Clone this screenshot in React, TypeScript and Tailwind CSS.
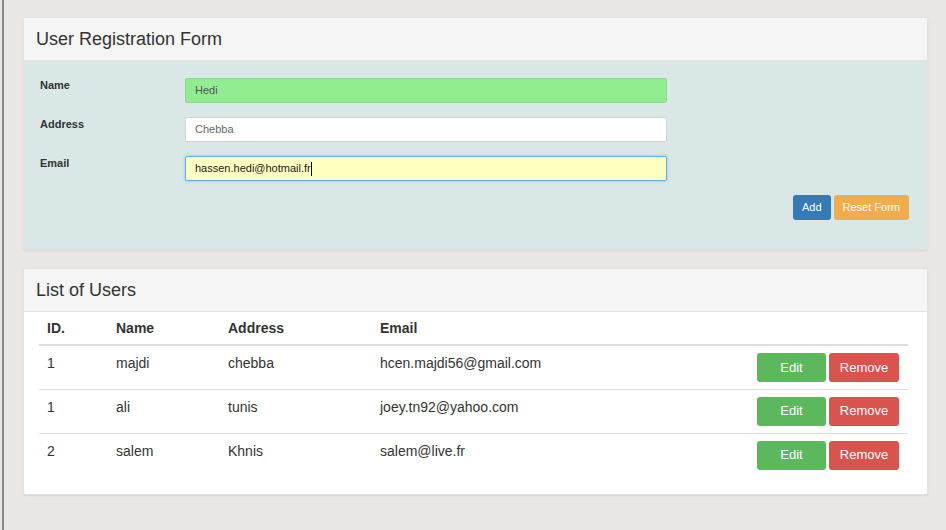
const users = [
  { id: 1, name: "majdi", address: "chebba", email: "hcen.majdi56@gmail.com" },
  { id: 1, name: "ali", address: "tunis", email: "joey.tn92@yahoo.com" },
  { id: 2, name: "salem", address: "Khnis", email: "salem@live.fr" },
];

function Panel({ title, children, bodyClass }: { title: string; children: React.ReactNode; bodyClass: string }) {
  return (
    <div className="w-[905px] rounded-[3px] border border-[#e2e2e2] bg-white shadow-[0_1px_2px_rgba(0,0,0,0.08)]">
      <div className="h-[43px] bg-[#f5f5f5] border-b border-[#e4e4e4] px-[12px] flex items-center">
        <h3 className="text-[18px] text-[#333] leading-none">{title}</h3>
      </div>
      <div className={bodyClass}>{children}</div>
    </div>
  );
}

export default function App() {
  return (
    <div className="h-[530px] w-[946px] bg-[#e9e6e3] font-['Liberation_Sans',Arial,sans-serif] overflow-hidden">
      <div className="ml-[2px] h-full border-l-2 border-[#8a8a8a] pl-[19px] pt-[17px] flex flex-col gap-[18px]">
        <Panel title="User Registration Form" bodyClass="bg-[#d9e7e7] h-[188px] pt-[17px] pl-[16px] pr-[17px]">
          <div className="flex flex-col gap-[14px]">
            {[
              { label: "Name", value: "Hedi", cls: "bg-[#90ee90] border-[#8fd88f] text-[#555]" },
              { label: "Address", value: "Chebba", cls: "bg-white border-[#d4d4d4] text-[#666]" },
              { label: "Email", value: "hassen.hedi@hotmail.fr", cls: "bg-[#ffffc0] border-[#66afe9] text-[#222] shadow-[0_0_3px_rgba(102,175,233,0.7)]" },
            ].map((f) => (
              <div key={f.label} className="flex items-start">
                <label className="w-[145px] text-[11px] font-bold text-[#333] -mt-[1px]">{f.label}</label>
                <div className={`w-[482px] h-[25px] border rounded-[2px] px-[9px] flex items-center text-[11px] ${f.cls}`}>
                  {f.value}
                  {f.label === "Email" && <span className="w-px h-[14px] bg-black" />}
                </div>
              </div>
            ))}
          </div>
          <div className="flex justify-end gap-[3px] mt-[14px] pr-[1px]">
            <button className="h-[25px] px-[9px] rounded-[3px] bg-[#337ab7] text-white text-[11px]">Add</button>
            <button className="h-[25px] px-[9px] rounded-[3px] bg-[#f0ad4e] text-white text-[11px]">Reset Form</button>
          </div>
        </Panel>

        <Panel title="List of Users" bodyClass="pl-[15px] pr-[16px] pb-[17px]">
          <table className="w-[869px] text-[14px] text-[#333]">
            <thead>
              <tr className="border-b-2 border-[#ddd]">
                <th className="w-[69px] text-left font-bold px-[8px] h-[33px]">ID.</th>
                <th className="w-[112px] text-left font-bold px-[8px]">Name</th>
                <th className="w-[152px] text-left font-bold px-[8px]">Address</th>
                <th className="text-left font-bold px-[8px]">Email</th>
                <th />
              </tr>
            </thead>
            <tbody>
              {users.map((u, i) => (
                <tr key={i} className={i < users.length - 1 ? "border-b border-[#ddd]" : ""}>
                  <td className="px-[8px] pt-[7px] align-top h-[44px]">{u.id}</td>
                  <td className="px-[8px] pt-[7px] align-top">{u.name}</td>
                  <td className="px-[8px] pt-[7px] align-top">{u.address}</td>
                  <td className="px-[8px] pt-[7px] align-top">{u.email}</td>
                  <td className="pt-[7px] align-top pr-[9px]">
                    <div className="flex justify-end gap-[3px]">
                      <button className="w-[69px] h-[29px] rounded-[3px] bg-[#5cb85c] text-white text-[13px]">Edit</button>
                      <button className="w-[70px] h-[29px] rounded-[3px] bg-[#d9534f] text-white text-[13px]">Remove</button>
                    </div>
                  </td>
                </tr>
              ))}
            </tbody>
          </table>
        </Panel>
      </div>
    </div>
  );
}
